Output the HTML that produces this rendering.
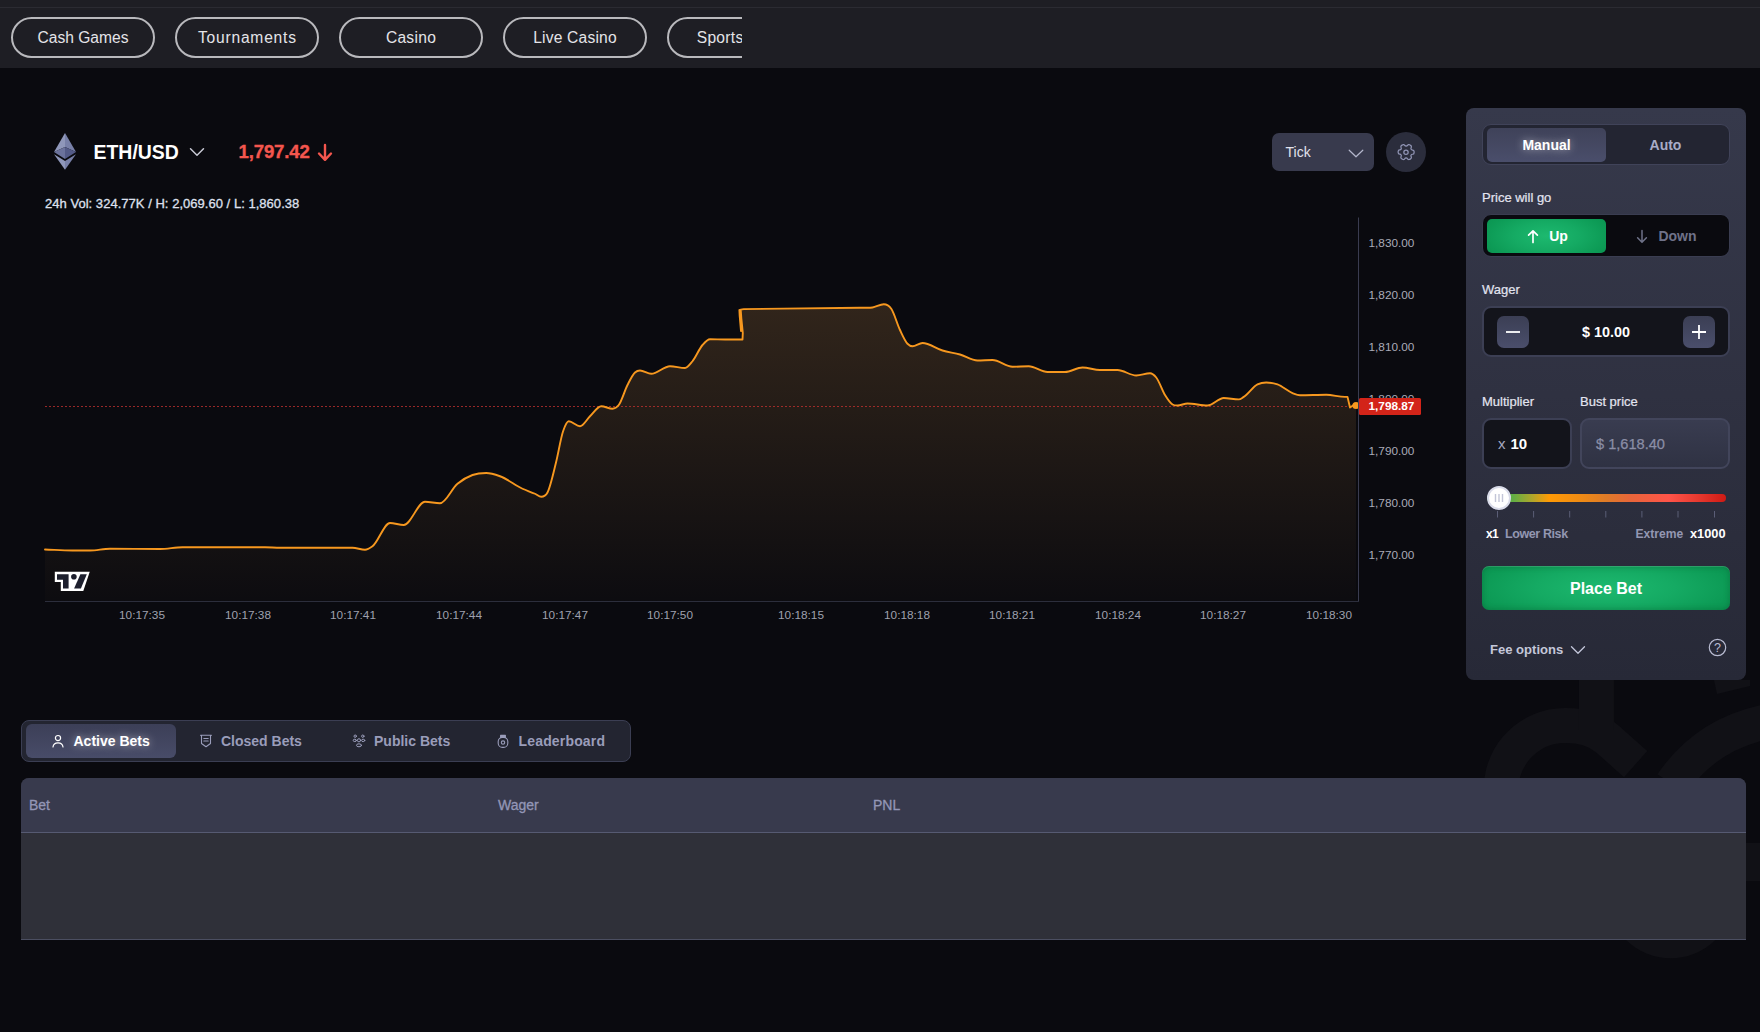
<!DOCTYPE html>
<html lang="en">
<head>
<meta charset="utf-8">
<title>ETH/USD</title>
<style>
*{box-sizing:border-box;margin:0;padding:0}
html,body{width:1760px;height:1032px;overflow:hidden;background:#0a0a0f}
body{position:relative;font-family:"Liberation Sans",sans-serif;color:#fff}
.abs{position:absolute}
/* header */
.hdr{position:absolute;left:0;top:0;width:1760px;height:68px;background:#1e1e24}
.hdr .ln{position:absolute;left:0;top:7px;width:1760px;height:1px;background:#2b2b32}
.nav{position:absolute;left:0;top:0;width:742px;height:68px;overflow:hidden}
.pill{position:absolute;top:17px;width:144px;height:41px;border:2px solid #b9b9bd;border-radius:21px;color:#e4e4e8;font-size:15.6px;line-height:37px;text-align:center;white-space:nowrap}
/* chart header */
.sym{position:absolute;left:93.500px;top:140px;font-size:19.450px;font-weight:bold;line-height:24px;color:#fff;white-space:nowrap}
.price{position:absolute;left:238.5px;top:140px;font-size:18.6px;font-weight:bold;line-height:24px;color:#f4564e;white-space:nowrap;letter-spacing:-0.15px;-webkit-text-stroke:.35px #f4564e}
.vol{position:absolute;left:45px;top:196px;font-size:13px;line-height:16px;color:#dfe0ee;white-space:nowrap;-webkit-text-stroke:.3px #dfe0ee;letter-spacing:.03px}
.tick{position:absolute;left:1272px;top:133px;width:102px;height:38px;border-radius:7px;background:#383a4d;color:#e2e2ec;font-size:14px;line-height:39px;padding-left:13.500px}
.gear{position:absolute;left:1386px;top:132px;width:40px;height:40px;border-radius:50%;background:#2b2d3c}
.ax{font-family:"Liberation Sans",sans-serif;font-size:11.8px;fill:#a9abb8}
.tx{fill:#9fa1ae}
/* panel */
.panel{position:absolute;left:1466px;top:108px;width:280px;height:572px;border-radius:8px;background:linear-gradient(180deg,#36394b 0%,#2f3141 50%,#272937 100%)}
.lbl{position:absolute;font-size:13px;line-height:16px;color:#e3e4f0;white-space:nowrap;-webkit-text-stroke:.2px #e3e4f0}
.seg{position:absolute;left:1482px;width:248px;border-radius:9px}
.segbtn{position:absolute;width:119px;height:34px;border-radius:5px;font-weight:bold;font-size:14px;line-height:34px;text-align:center}
.box{position:absolute;border-radius:9px;border:2px solid #3c3f54;background:#13141b}
.sq{position:absolute;width:32px;height:32px;border-radius:7px;background:linear-gradient(180deg,#3b3e54,#4a4e6b)}
.place{position:absolute;left:1482px;top:566px;width:248px;height:44px;border-radius:7px;background:radial-gradient(ellipse 62% 95% at 50% 50%,#1db96f 0%,#15aa63 45%,#0d9b56 80%,#0a9350 100%);box-shadow:inset 0 1px 0 rgba(255,255,255,.14),inset 0 0 6px rgba(0,70,35,.35);font-size:16px;font-weight:bold;text-align:center;line-height:45.500px;color:#fff}
/* tabs */
.tabs{position:absolute;left:21px;top:720px;width:610px;height:42px;border:1px solid #3b3e53;border-radius:8px;background:#232531}
.tab{position:absolute;top:727px;font-size:14px;font-weight:bold;line-height:28px;color:#9a9dba;white-space:nowrap}
.tbl{position:absolute;left:21px;top:778px;width:1725px;height:162px;border-radius:8px 8px 0 0;overflow:hidden;background:#2f3039;border-bottom:1px solid #4b4e61}
.tbl .th{position:absolute;left:0;top:0;width:100%;height:55px;background:#383a4d;border-bottom:1px solid #565a72}
.tbl .th span{position:absolute;top:18px;font-size:14px;line-height:18px;color:#9396b6;-webkit-text-stroke:.3px #9396b6}
</style>
</head>
<body>
<!-- watermark -->
<svg class="abs" style="left:1440px;top:640px" width="320" height="392" viewBox="1440 640 320 392">
<g fill="none" stroke="#111116" stroke-width="35">
<path d="M1502 800 A64 64 0 0 1 1566 725.400 C1585 725.400 1597 730 1607.400 739 L1635.600 764.100"/>
<path d="M1596.400 640 L1596.400 730"/>
<path d="M1672 784 Q1705 735 1765 722"/>
</g>
<circle cx="1670.700" cy="895" r="63.300" fill="#111116"/>
<polygon points="1714,680 1750,680 1750,686 1717,694" fill="#111116"/>
<rect x="1746" y="843" width="14" height="38" fill="#111116"/>
</svg>

<div class="hdr"><div class="ln"></div>
<div class="nav">
<div class="pill" style="left:11px">Cash Games</div>
<div class="pill" style="left:175px;letter-spacing:.78px;text-indent:.78px">Tournaments</div>
<div class="pill" style="left:339px;letter-spacing:.28px">Casino</div>
<div class="pill" style="left:503px;letter-spacing:.2px">Live Casino</div>
<div class="pill" style="left:667px;text-align:left;padding-left:27.700px;letter-spacing:.3px">Sports</div>
</div></div>

<!-- symbol header -->
<svg class="abs" style="left:52px;top:132px" width="26" height="40" viewBox="0 0 26 40">
<polygon points="13,1 2,20 13,15" fill="#8f97ba"/>
<polygon points="13,1 24,20 13,15" fill="#7880a8"/>
<polygon points="2,20 13,15 13,27" fill="#6b729c"/>
<polygon points="24,20 13,15 13,27" fill="#535a87"/>
<polygon points="2,22.300 13,29 13,37.800" fill="#8f97ba"/>
<polygon points="24,22.300 13,29 13,37.800" fill="#7880a8"/>
</svg>
<div class="sym">ETH/USD</div>
<svg class="abs" style="left:189px;top:147px" width="16" height="10" viewBox="0 0 16 10"><path d="M1.5 1.8 L8 8.2 L14.5 1.8" fill="none" stroke="#c9cad6" stroke-width="1.5" stroke-linecap="round" stroke-linejoin="round"/></svg>
<div class="price">1,797.42</div>
<svg class="abs" style="left:317px;top:143px" width="16" height="19" viewBox="0 0 16 19"><path d="M8 2 V16.5 M2 10.5 L8 16.8 L14 10.5" fill="none" stroke="#f4564e" stroke-width="2.4" stroke-linecap="round" stroke-linejoin="round"/></svg>
<div class="vol">24h Vol: 324.77K / H: 2,069.60 / L: 1,860.38</div>

<div class="tick">Tick</div>
<svg class="abs" style="left:1348px;top:149px" width="16" height="9" viewBox="0 0 16 9"><path d="M1.2 1.2 L8 7.8 L14.8 1.2" fill="none" stroke="#b4b7cc" stroke-width="1.2" stroke-linecap="round" stroke-linejoin="round"/></svg>
<div class="gear"></div>
<svg class="abs" style="left:1396px;top:142px" width="20" height="20" viewBox="0 0 24 24" fill="none" stroke="#9094b4" stroke-width="1.500" stroke-linecap="round" stroke-linejoin="round"><g transform="rotate(90 12 12)">
<path d="M20.8 7.6l-.6-1.1a1.9 1.9 0 0 0-2.6-.7 1.9 1.9 0 0 1-2.9-1.6A1.9 1.9 0 0 0 12.8 2.3h-1.3a1.9 1.9 0 0 0-1.9 1.9 1.9 1.9 0 0 1-2.9 1.6 1.9 1.9 0 0 0-2.6.7l-.7 1.1a1.9 1.9 0 0 0 .7 2.6 1.9 1.9 0 0 1 0 3.300 1.9 1.9 0 0 0-.7 2.6l.6 1.100a1.9 1.9 0 0 0 2.6.7 1.9 1.9 0 0 1 2.900 1.600 1.9 1.900 0 0 0 1.900 1.900h1.300a1.900 1.900 0 0 0 1.900-1.900 1.900 1.900 0 0 1 2.900-1.600 1.900 1.900 0 0 0 2.600-.7l.7-1.100a1.900 1.900 0 0 0-.7-2.600 1.900 1.900 0 0 1 0-3.300 1.900 1.900 0 0 0 .7-2.600z"/>
<circle cx="12.200" cy="12" r="2.600"/></g>
</svg>

<!-- chart -->
<svg class="abs" style="left:0;top:0" width="1460" height="640" viewBox="0 0 1460 640">
<defs>
<linearGradient id="ag" x1="0" y1="216" x2="0" y2="601" gradientUnits="userSpaceOnUse">
<stop offset="0" stop-color="#f3ab55" stop-opacity="0.215"/>
<stop offset="1" stop-color="#f3ab55" stop-opacity="0.012"/>
</linearGradient>
</defs>
<path d="M45.00 549.50 C54.17 549.83 63.33 550.50 72.50 550.50 C78.33 550.50 84.17 550.50 90.00 550.50 C96.67 550.50 103.33 548.75 110.00 548.75 C126.67 548.75 143.33 549.00 160.00 549.00 C167.50 549.00 175.00 547.25 182.50 547.25 C210.00 547.25 237.50 547.25 265.00 547.25 C270.00 547.25 275.00 547.75 280.00 547.75 C304.17 547.75 328.33 547.75 352.50 547.75 C356.67 547.75 360.83 549.75 365.00 549.75 C367.50 549.75 370.00 548.06 372.50 546.25 C378.33 542.02 384.17 523.00 390.00 523.00 C394.58 523.00 399.17 525.00 403.75 525.00 C410.83 525.00 417.92 501.75 425.00 501.75 C430.00 501.75 435.00 503.25 440.00 503.25 C445.83 503.25 451.67 488.58 457.50 483.75 C462.50 479.61 467.50 476.77 472.50 475.00 C477.08 473.37 481.67 473.00 486.25 473.00 C490.83 473.00 495.42 474.61 500.00 476.25 C507.50 478.93 515.00 485.33 522.50 488.75 C526.67 490.65 530.83 491.86 535.00 493.75 C537.08 494.69 539.17 496.75 541.25 496.75 C543.33 496.75 545.42 496.43 547.50 492.50 C550.33 487.15 553.17 473.90 556.00 462.50 C558.33 453.11 560.67 438.44 563.00 431.50 C564.92 425.80 566.83 421.25 568.75 421.25 C572.50 421.25 576.25 426.25 580.00 426.25 C583.33 426.25 586.67 419.41 590.00 416.25 C593.75 412.70 597.50 406.25 601.25 406.25 C605.00 406.25 608.75 408.75 612.50 408.75 C614.58 408.75 616.67 407.71 618.75 405.00 C621.67 401.20 624.58 390.69 627.50 385.00 C630.00 380.12 632.50 374.77 635.00 372.50 C636.67 370.99 638.33 370.50 640.00 370.50 C643.75 370.50 647.50 373.75 651.25 373.75 C657.50 373.75 663.75 366.25 670.00 366.25 C675.00 366.25 680.00 368.00 685.00 368.00 C687.50 368.00 690.00 364.28 692.50 361.25 C695.83 357.21 699.17 348.78 702.50 345.00 C705.00 342.16 707.50 339.25 710.00 339.25 C715.00 339.25 720.00 339.50 725.00 339.50 C730.83 339.50 736.67 339.50 742.50 339.50 L742.80 333.00 L741.30 318.00 L740.20 311.00 L739.40 309.90 L739.70 316.00 L741.00 331.00 L741.30 318.00 L740.70 309.60 L743.75 309.10 C782.50 308.63 821.25 308.31 860.00 307.70 C864.17 307.63 868.33 308.17 872.50 307.50 C876.25 306.90 880.00 304.25 883.75 304.25 C886.25 304.25 888.75 305.14 891.25 308.75 C894.17 312.96 897.08 323.85 900.00 330.00 C902.50 335.27 905.00 341.17 907.50 343.75 C909.17 345.47 910.83 346.25 912.50 346.25 C915.83 346.25 919.17 343.00 922.50 343.00 C929.17 343.00 935.83 348.52 942.50 350.50 C948.33 352.23 954.17 352.83 960.00 354.50 C965.83 356.17 971.67 360.50 977.50 360.50 C982.50 360.50 987.50 360.00 992.50 360.00 C999.17 360.00 1005.83 366.75 1012.50 366.75 C1017.92 366.75 1023.33 366.25 1028.75 366.25 C1035.00 366.25 1041.25 372.00 1047.50 372.00 C1053.33 372.00 1059.17 372.00 1065.00 372.00 C1070.83 372.00 1076.67 367.50 1082.50 367.50 C1088.33 367.50 1094.17 370.00 1100.00 370.00 C1105.83 370.00 1111.67 370.00 1117.50 370.00 C1123.75 370.00 1130.00 375.50 1136.25 375.50 C1140.83 375.50 1145.42 373.25 1150.00 373.25 C1152.08 373.25 1154.17 374.94 1156.25 377.50 C1159.17 381.09 1162.08 390.32 1165.00 395.00 C1167.50 399.01 1170.00 402.93 1172.50 404.50 C1174.17 405.54 1175.83 405.50 1177.50 405.50 C1180.83 405.50 1184.17 403.50 1187.50 403.50 C1194.17 403.50 1200.83 405.50 1207.50 405.50 C1212.92 405.50 1218.33 398.00 1223.75 398.00 C1228.75 398.00 1233.75 399.40 1238.75 399.40 C1240.42 399.40 1242.08 397.92 1243.75 396.90 C1248.33 394.11 1252.92 386.63 1257.50 384.40 C1260.42 382.98 1263.33 382.50 1266.25 382.50 C1270.00 382.50 1273.75 383.11 1277.50 384.40 C1282.50 386.13 1287.50 391.18 1292.50 393.10 C1295.00 394.06 1297.50 395.25 1300.00 395.25 C1308.75 395.25 1317.50 394.75 1326.25 394.75 C1332.50 394.75 1338.75 396.90 1345.00 396.90 C1345.83 396.90 1346.67 396.90 1347.50 396.90 L1350.00 407.50 L1353.75 405.00 L1356.00 405.50 L1356 601 L45 601 Z" fill="url(#ag)"/>
<line x1="45" y1="406.5" x2="1358" y2="406.5" stroke="#c0312f" stroke-width="1" stroke-dasharray="2 2" opacity=".78"/>
<path d="M45.00 549.50 C54.17 549.83 63.33 550.50 72.50 550.50 C78.33 550.50 84.17 550.50 90.00 550.50 C96.67 550.50 103.33 548.75 110.00 548.75 C126.67 548.75 143.33 549.00 160.00 549.00 C167.50 549.00 175.00 547.25 182.50 547.25 C210.00 547.25 237.50 547.25 265.00 547.25 C270.00 547.25 275.00 547.75 280.00 547.75 C304.17 547.75 328.33 547.75 352.50 547.75 C356.67 547.75 360.83 549.75 365.00 549.75 C367.50 549.75 370.00 548.06 372.50 546.25 C378.33 542.02 384.17 523.00 390.00 523.00 C394.58 523.00 399.17 525.00 403.75 525.00 C410.83 525.00 417.92 501.75 425.00 501.75 C430.00 501.75 435.00 503.25 440.00 503.25 C445.83 503.25 451.67 488.58 457.50 483.75 C462.50 479.61 467.50 476.77 472.50 475.00 C477.08 473.37 481.67 473.00 486.25 473.00 C490.83 473.00 495.42 474.61 500.00 476.25 C507.50 478.93 515.00 485.33 522.50 488.75 C526.67 490.65 530.83 491.86 535.00 493.75 C537.08 494.69 539.17 496.75 541.25 496.75 C543.33 496.75 545.42 496.43 547.50 492.50 C550.33 487.15 553.17 473.90 556.00 462.50 C558.33 453.11 560.67 438.44 563.00 431.50 C564.92 425.80 566.83 421.25 568.75 421.25 C572.50 421.25 576.25 426.25 580.00 426.25 C583.33 426.25 586.67 419.41 590.00 416.25 C593.75 412.70 597.50 406.25 601.25 406.25 C605.00 406.25 608.75 408.75 612.50 408.75 C614.58 408.75 616.67 407.71 618.75 405.00 C621.67 401.20 624.58 390.69 627.50 385.00 C630.00 380.12 632.50 374.77 635.00 372.50 C636.67 370.99 638.33 370.50 640.00 370.50 C643.75 370.50 647.50 373.75 651.25 373.75 C657.50 373.75 663.75 366.25 670.00 366.25 C675.00 366.25 680.00 368.00 685.00 368.00 C687.50 368.00 690.00 364.28 692.50 361.25 C695.83 357.21 699.17 348.78 702.50 345.00 C705.00 342.16 707.50 339.25 710.00 339.25 C715.00 339.25 720.00 339.50 725.00 339.50 C730.83 339.50 736.67 339.50 742.50 339.50 L742.80 333.00 L741.30 318.00 L740.20 311.00 L739.40 309.90 L739.70 316.00 L741.00 331.00 L741.30 318.00 L740.70 309.60 L743.75 309.10 C782.50 308.63 821.25 308.31 860.00 307.70 C864.17 307.63 868.33 308.17 872.50 307.50 C876.25 306.90 880.00 304.25 883.75 304.25 C886.25 304.25 888.75 305.14 891.25 308.75 C894.17 312.96 897.08 323.85 900.00 330.00 C902.50 335.27 905.00 341.17 907.50 343.75 C909.17 345.47 910.83 346.25 912.50 346.25 C915.83 346.25 919.17 343.00 922.50 343.00 C929.17 343.00 935.83 348.52 942.50 350.50 C948.33 352.23 954.17 352.83 960.00 354.50 C965.83 356.17 971.67 360.50 977.50 360.50 C982.50 360.50 987.50 360.00 992.50 360.00 C999.17 360.00 1005.83 366.75 1012.50 366.75 C1017.92 366.75 1023.33 366.25 1028.75 366.25 C1035.00 366.25 1041.25 372.00 1047.50 372.00 C1053.33 372.00 1059.17 372.00 1065.00 372.00 C1070.83 372.00 1076.67 367.50 1082.50 367.50 C1088.33 367.50 1094.17 370.00 1100.00 370.00 C1105.83 370.00 1111.67 370.00 1117.50 370.00 C1123.75 370.00 1130.00 375.50 1136.25 375.50 C1140.83 375.50 1145.42 373.25 1150.00 373.25 C1152.08 373.25 1154.17 374.94 1156.25 377.50 C1159.17 381.09 1162.08 390.32 1165.00 395.00 C1167.50 399.01 1170.00 402.93 1172.50 404.50 C1174.17 405.54 1175.83 405.50 1177.50 405.50 C1180.83 405.50 1184.17 403.50 1187.50 403.50 C1194.17 403.50 1200.83 405.50 1207.50 405.50 C1212.92 405.50 1218.33 398.00 1223.75 398.00 C1228.75 398.00 1233.75 399.40 1238.75 399.40 C1240.42 399.40 1242.08 397.92 1243.75 396.90 C1248.33 394.11 1252.92 386.63 1257.50 384.40 C1260.42 382.98 1263.33 382.50 1266.25 382.50 C1270.00 382.50 1273.75 383.11 1277.50 384.40 C1282.50 386.13 1287.50 391.18 1292.50 393.10 C1295.00 394.06 1297.50 395.25 1300.00 395.25 C1308.75 395.25 1317.50 394.75 1326.25 394.75 C1332.50 394.75 1338.75 396.90 1345.00 396.90 C1345.83 396.90 1346.67 396.90 1347.50 396.90 L1350.00 407.50 L1353.75 405.00 L1356.00 405.50" fill="none" stroke="#f7981f" stroke-width="1.900" stroke-linejoin="round" stroke-linecap="round"/>
<circle cx="1356" cy="405.5" r="3.6" fill="#f7981f"/>
<rect x="1358" y="216" width="80" height="400" fill="#0a0a0f"/>
<line x1="1358.500" y1="217.500" x2="1358.500" y2="601" stroke="#3a3c50" stroke-width="1"/>
<line x1="45" y1="601.5" x2="1359" y2="601.5" stroke="#2c2e3c" stroke-width="1"/>
<text x="1368.5" y="246.7" class="ax">1,830.00</text><text x="1368.5" y="298.7" class="ax">1,820.00</text><text x="1368.5" y="350.7" class="ax">1,810.00</text><text x="1368.5" y="402.7" class="ax">1,800.00</text><text x="1368.5" y="454.7" class="ax">1,790.00</text><text x="1368.5" y="506.7" class="ax">1,780.00</text><text x="1368.5" y="558.7" class="ax">1,770.00</text>
<rect x="1359" y="398" width="62" height="17" rx="1.500" fill="#d32419"/>
<text x="1368.5" y="410.200" style="font-family:'Liberation Sans',sans-serif;font-size:11.8px;font-weight:bold;fill:#fff">1,798.87</text>
<text x="142.0" y="619" class="ax tx" text-anchor="middle">10:17:35</text><text x="248.0" y="619" class="ax tx" text-anchor="middle">10:17:38</text><text x="353.0" y="619" class="ax tx" text-anchor="middle">10:17:41</text><text x="459.0" y="619" class="ax tx" text-anchor="middle">10:17:44</text><text x="565.0" y="619" class="ax tx" text-anchor="middle">10:17:47</text><text x="670.0" y="619" class="ax tx" text-anchor="middle">10:17:50</text><text x="801.0" y="619" class="ax tx" text-anchor="middle">10:18:15</text><text x="907.0" y="619" class="ax tx" text-anchor="middle">10:18:18</text><text x="1012.0" y="619" class="ax tx" text-anchor="middle">10:18:21</text><text x="1118.0" y="619" class="ax tx" text-anchor="middle">10:18:24</text><text x="1223.0" y="619" class="ax tx" text-anchor="middle">10:18:27</text><text x="1329.0" y="619" class="ax tx" text-anchor="middle">10:18:30</text>
<!-- TV logo -->
<g>
<polygon points="54.8,571.800 89.750,571.800 83.300,591.100 60.800,591.100 60.800,582 54.800,582" fill="#fff"/>
<polygon points="57,574.200 68.600,574.200 68.600,588.500 63,588.500 63,579.700 57,579.700" fill="#1d1f2d"/>
<circle cx="73.900" cy="576.700" r="2.800" fill="#1d1f2d"/>
<polygon points="80.400,574.200 86.800,574.200 80.900,588.500 74.100,588.500" fill="#1d1f2d"/>
</g>
</svg>

<!-- panel -->
<div class="panel"></div>
<div class="seg" style="top:124px;height:41px;background:#232532;border:1px solid #404359"></div>
<div class="segbtn" style="left:1487px;top:128px;background:linear-gradient(180deg,#3f4259,#4a4e6b);color:#fff;text-shadow:0 0 8px rgba(255,255,255,.55)">Manual</div>
<div class="segbtn" style="left:1606px;top:128px;color:#a9acc6">Auto</div>
<div class="lbl" style="left:1482px;top:190px">Price will go</div>
<div class="seg" style="top:214px;height:43px;background:#0a0a0f;border:1px solid #3a3d51"></div>
<div class="segbtn" style="left:1487px;top:219px;background:radial-gradient(ellipse 62% 95% at 50% 50%,#1db96f 0%,#15aa63 45%,#0d9b56 80%,#0a9350 100%);color:#fff;padding-left:24px">Up</div>
<svg class="abs" style="left:1526px;top:229px" width="14" height="15" viewBox="0 0 14 15"><path d="M7 13.500 V2 M2.600 6.200 L7 1.800 L11.400 6.200" fill="none" stroke="#fff" stroke-width="1.7" stroke-linecap="round" stroke-linejoin="round"/></svg>
<div class="segbtn" style="left:1606px;top:219px;color:#6f7289;padding-left:24px">Down</div>
<svg class="abs" style="left:1635px;top:229px" width="14" height="15" viewBox="0 0 14 15"><path d="M7 1.500 V13 M2.600 8.800 L7 13.200 L11.400 8.800" fill="none" stroke="#6f7289" stroke-width="1.5" stroke-linecap="round" stroke-linejoin="round"/></svg>

<div class="lbl" style="left:1482px;top:282px">Wager</div>
<div class="box" style="left:1482px;top:306px;width:248px;height:51px"></div>
<div class="sq" style="left:1497px;top:316px"></div>
<div class="sq" style="left:1683px;top:316px"></div>
<svg class="abs" style="left:1497px;top:316px" width="32" height="32"><path d="M9 16 H23" stroke="#fff" stroke-width="1.8"/></svg>
<svg class="abs" style="left:1683px;top:316px" width="32" height="32"><path d="M9 16 H23 M16 9 V23" stroke="#fff" stroke-width="1.8"/></svg>
<div class="abs" style="left:1546px;top:322px;width:120px;text-align:center;font-size:14.400px;font-weight:bold;line-height:20px;color:#fff">$ 10.00</div>

<div class="lbl" style="left:1482px;top:394px">Multiplier</div>
<div class="lbl" style="left:1580px;top:394px">Bust price</div>
<div class="box" style="left:1482px;top:418px;width:90px;height:51px"></div>
<div class="abs" style="left:1498px;top:434px;font-size:15px;line-height:20px;color:#a5a8c0">x</div>
<div class="abs" style="left:1510.500px;top:434px;font-size:15px;font-weight:bold;line-height:20px;color:#fff">10</div>
<div class="box" style="left:1580px;top:418px;width:150px;height:51px;background:linear-gradient(180deg,#393c50,#2f3243);border-color:#42455b"></div>
<div class="abs" style="left:1596px;top:434px;font-size:14.600px;line-height:20px;color:#8b8ea6;-webkit-text-stroke:.25px #8b8ea6">$ 1,618.40</div>

<!-- slider -->
<div class="abs" style="left:1487px;top:494px;width:239px;height:8px;border-radius:4px;background:linear-gradient(90deg,#4caf50 0%,#62ae44 11%,#b0a62a 19%,#ff9a05 26%,#ef8b14 39%,#df7b28 50%,#e8663a 60%,#ff5449 76%,#e83a30 88%,#cf1a14 100%)"></div>
<div class="abs" style="left:1487px;top:486px;width:24px;height:24px;border-radius:50%;background:#fff;border:2px solid #d9dbe9"></div>
<svg class="abs" style="left:1487px;top:486px" width="24" height="24"><path d="M8.500 8 V16 M12 8 V16 M15.500 8 V16" stroke="#c3c6d8" stroke-width="1.4"/></svg>
<svg class="abs" style="left:1487px;top:510px" width="240" height="9"><path d="M10.500 1 V7.500 M46.600 1 V7.500 M82.700 1 V7.500 M118.800 1 V7.500 M154.900 1 V7.500 M191 1 V7.500 M227.500 1 V7.500" stroke="#5b5e77" stroke-width="1"/></svg>
<div class="abs" style="left:1486px;top:526px;font-size:12px;font-weight:bold;line-height:16px;color:#fff;letter-spacing:-.6px">x1</div>
<div class="abs" style="left:1505px;top:526px;font-size:12.500px;font-weight:bold;line-height:16px;color:#9397b2;letter-spacing:-.4px">Lower Risk</div>
<div class="abs" style="left:1635.500px;top:526px;font-size:12.100px;font-weight:bold;line-height:16px;color:#9397b2">Extreme</div>
<div class="abs" style="left:1690px;top:526px;font-size:12.800px;font-weight:bold;line-height:16px;color:#fff">x1000</div>

<div class="place">Place Bet</div>
<div class="abs" style="left:1490px;top:641px;font-size:13.050px;font-weight:bold;line-height:17px;color:#c4c7da">Fee options</div>
<svg class="abs" style="left:1570px;top:645px" width="16" height="10" viewBox="0 0 16 10"><path d="M1.500 1.800 L8 8.200 L14.500 1.800" fill="none" stroke="#c4c7da" stroke-width="1.300" stroke-linecap="round" stroke-linejoin="round"/></svg>
<svg class="abs" style="left:1708px;top:638px" width="19" height="19" viewBox="0 0 19 19"><circle cx="9.500" cy="9.500" r="8.200" fill="none" stroke="#b9bcd2" stroke-width="1.200"/><text x="9.500" y="14" text-anchor="middle" style="font-family:'Liberation Sans',sans-serif;font-size:12.500px;fill:#b9bcd2">?</text></svg>

<!-- tabs -->
<div class="tabs"></div>
<div class="abs" style="left:26px;top:724px;width:150px;height:34px;border-radius:6px;background:linear-gradient(180deg,#3c3f57,#484c68)"></div>
<svg class="abs" style="left:51px;top:734px" width="14" height="14" viewBox="0 0 14 14" fill="none" stroke="#fff" stroke-width="1.200" stroke-linecap="round"><circle cx="7" cy="4.100" r="2.600"/><path d="M2 13 C2.300 10 4.300 8.800 7 8.800 C9.700 8.800 11.700 10 12 13"/></svg>
<div class="tab" style="left:73.500px;color:#fff;text-shadow:0 0 8px rgba(255,255,255,.55)">Active Bets</div>
<svg class="abs" style="left:199px;top:734px" width="14" height="14" viewBox="0 0 14 14" fill="none" stroke="#9a9dba" stroke-width="1.100" stroke-linecap="round" stroke-linejoin="round"><path d="M1.500 1.200 H12.500 M2.500 1.200 V9.500 L7 12.800 L11.500 9.500 V1.200 M4.800 4.500 H9.200 M4.800 7 H9.200"/></svg>
<div class="tab" style="left:221px">Closed Bets</div>
<svg class="abs" style="left:352px;top:734px" width="14" height="14" viewBox="0 0 14 14" fill="none" stroke="#9a9dba" stroke-width="1" stroke-linecap="round"><circle cx="7" cy="6.300" r="1.600"/><ellipse cx="7" cy="11.300" rx="2.500" ry="1.500"/><circle cx="3.200" cy="2.200" r="1.200"/><circle cx="10.800" cy="2.200" r="1.200"/><ellipse cx="2.800" cy="6.400" rx="1.600" ry="1.200"/><ellipse cx="11.200" cy="6.400" rx="1.600" ry="1.200"/></svg>
<div class="tab" style="left:374px">Public Bets</div>
<svg class="abs" style="left:496px;top:734px" width="14" height="14" viewBox="0 0 14 14" fill="none" stroke="#9a9dba" stroke-width="1.100" stroke-linecap="round" stroke-linejoin="round"><path d="M4.600 3.400 V1.400 H9.400 V3.400 M4.600 2.400 H9.400"/><rect x="2.200" y="3.400" width="9.600" height="10" rx="4.200"/><circle cx="7" cy="8.600" r="1.700"/></svg>
<div class="tab" style="left:518.500px;letter-spacing:.17px">Leaderboard</div>

<div class="tbl"><div class="th"><span style="left:8px">Bet</span><span style="left:477px">Wager</span><span style="left:852px">PNL</span></div></div>
</body>
</html>
